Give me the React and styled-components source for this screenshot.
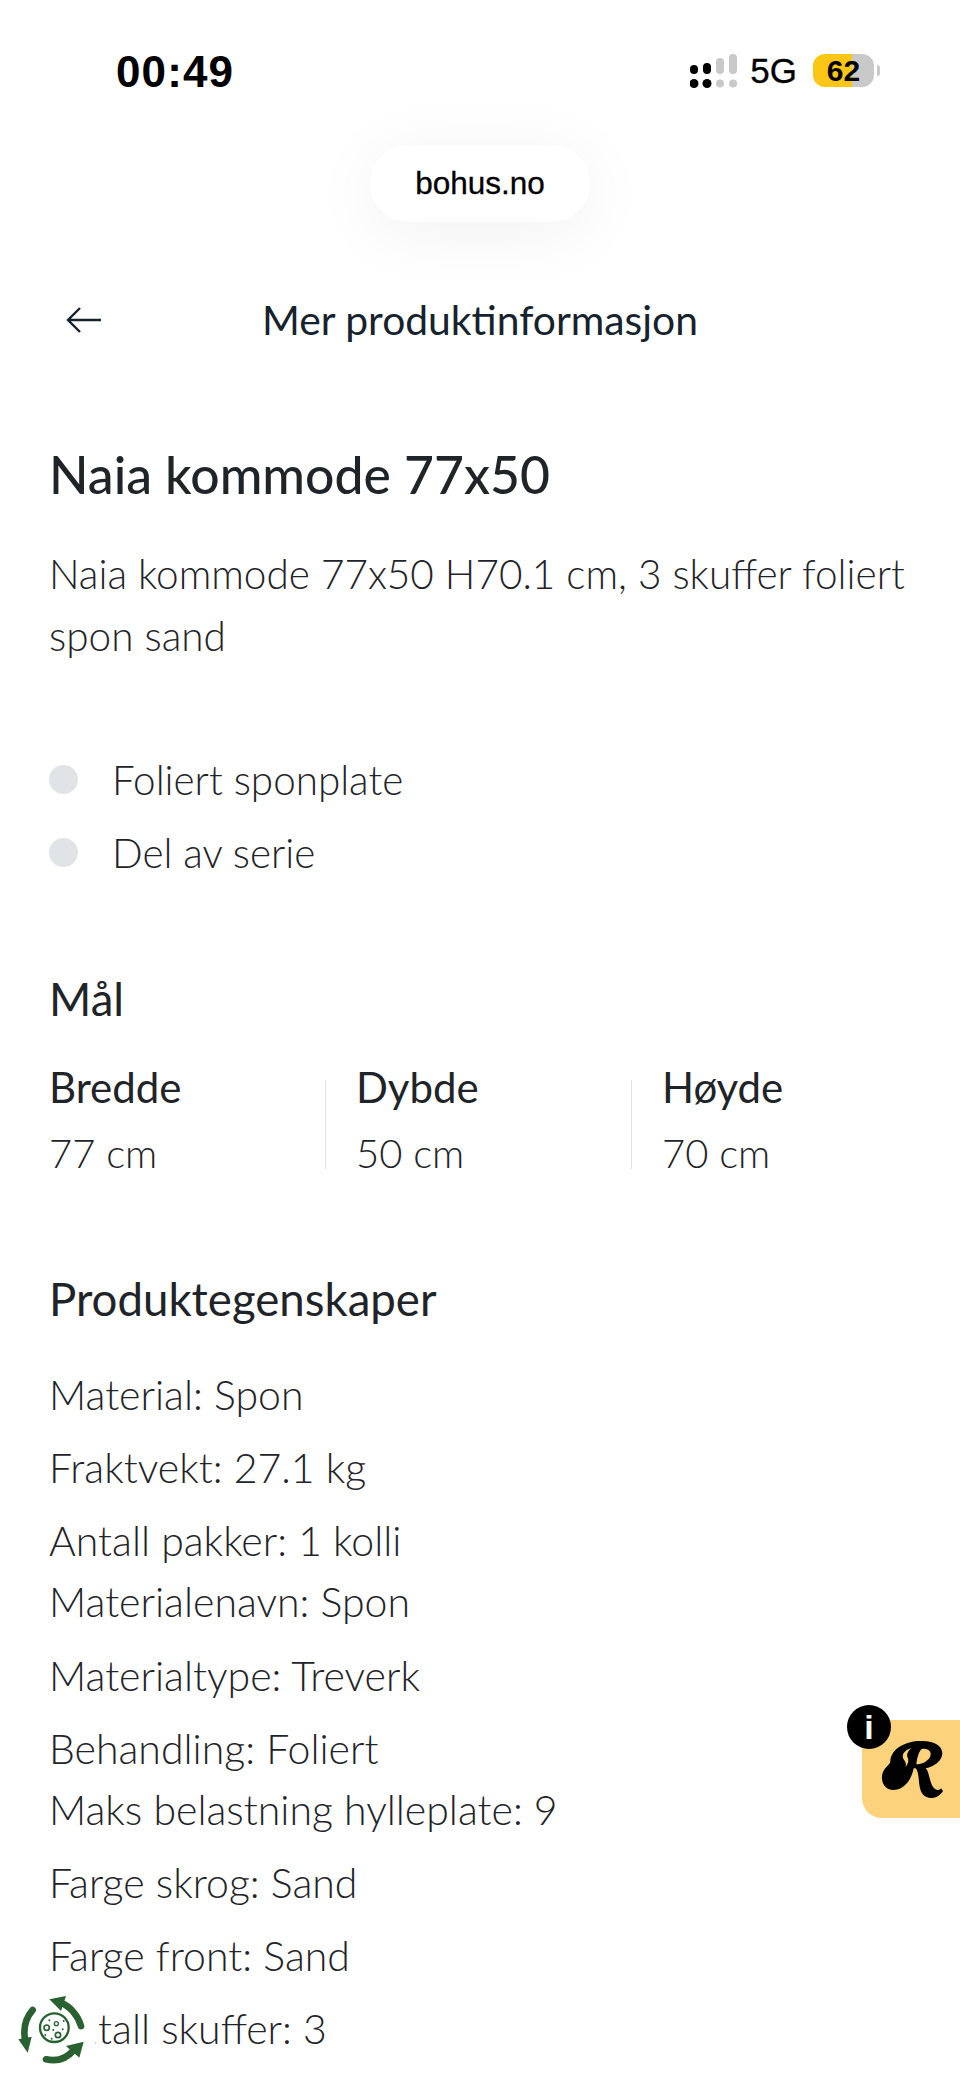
import React from "react";
import styled, { createGlobalStyle } from "styled-components";

const Global = createGlobalStyle`
  html, body { margin: 0; padding: 0; background: #fff; }
  body { font-family: "Lato", "Liberation Sans", sans-serif; color: #1f2428; }
  p, h1, h2, ul { margin: 0; padding: 0; }
`;

const Page = styled.div`
  position: relative;
  width: 960px;
  height: 2081px;
  overflow: hidden;
  background: #fff;
`;

const StatusBar = styled.div`
  display: flex;
  justify-content: space-between;
  align-items: center;
  height: 72px;
  padding: 36px 80px 0 116px;
  font-family: "Liberation Sans", Arial, sans-serif;
  color: #000;
`;

const Clock = styled.div`
  font-size: 44px;
  font-weight: 700;
  letter-spacing: 1.1px;
`;

const StatusIcons = styled.div`
  display: flex;
  align-items: center;
  margin-top: -3px;
`;

const Network = styled.span`
  font-size: 35px;
  margin: 0 16px 0 13px;
  -webkit-text-stroke: 0.3px #000;
`;

const Battery = styled.div`
  position: relative;
  width: 61px;
  height: 33px;
  border-radius: 12px;
  background: linear-gradient(90deg, #fcc714 0 39px, #c9c9c9 39px);
  font-size: 30px;
  font-weight: 700;
  line-height: 33px;
  text-align: center;
  margin-right: 6px;

  &::after {
    content: "";
    position: absolute;
    right: -6px;
    top: 11px;
    width: 3px;
    height: 11px;
    border-radius: 0 4px 4px 0;
    background: #c9c9c9;
  }
`;

const PillRow = styled.div`
  display: flex;
  justify-content: center;
  margin-top: 37px;
`;

const Pill = styled.div`
  width: 220px;
  height: 77px;
  border-radius: 38px;
  background: #fff;
  box-shadow: 0 10px 70px rgba(0, 0, 0, 0.06);
  font-family: "Liberation Sans", Arial, sans-serif;
  font-size: 31.5px;
  line-height: 77px;
  text-align: center;
  color: #000;
  -webkit-text-stroke: 0.3px #000;
`;

const Header = styled.div`
  display: grid;
  grid-template-columns: 1fr auto 1fr;
  align-items: center;
  height: 60px;
  margin-top: 68px;
`;

const BackIcon = styled.svg`
  display: block;
  margin-left: 66px;
`;

const Title = styled.h2`
  font-size: 40.8px;
  font-weight: 400;
  color: #16222c;
  line-height: 60px;
`;

const Main = styled.main`
  padding: 0 49px;
`;

const Heading = styled.h1`
  margin-top: 94px;
  font-size: 51.7px;
  font-weight: 500;
  line-height: 60px;
`;

const Description = styled.p`
  margin-top: 39px;
  font-size: 40.5px;
  font-weight: 300;
  line-height: 61.5px;
`;

const Bullets = styled.ul`
  list-style: none;
  margin-top: 77px;
`;

const Bullet = styled.li`
  display: flex;
  align-items: center;
  gap: 34px;
  height: 73px;
  font-size: 40.4px;
  font-weight: 300;

  &::before {
    content: "";
    width: 29px;
    height: 29px;
    border-radius: 50%;
    background: #e1e4e7;
  }
`;

const SectionTitle = styled.h2`
  margin-top: ${(p) => p.$top}px;
  font-size: 45.6px;
  font-weight: 400;
  line-height: 50px;
`;

const Dimensions = styled.div`
  display: flex;
  margin-top: 38px;
`;

const Dimension = styled.div`
  flex: none;
  width: ${(p) => (p.$first ? 276 : 275)}px;
  display: flex;
  flex-direction: column;
  gap: 16px;
`;

const DimLabel = styled.div`
  font-size: 42px;
  font-weight: 400;
  line-height: 50px;
`;

const DimValue = styled.div`
  font-size: 40px;
  font-weight: 300;
  line-height: 50px;
`;

const Divider = styled.div`
  flex: none;
  align-self: center;
  width: 1px;
  height: 89px;
  margin: 8px 30px 0 0;
  background: #dfe1e3;
`;

const Specs = styled.div`
  margin-top: 40px;
`;

const Spec = styled.p`
  margin-bottom: 12.2px;
  font-size: 41px;
  font-weight: 300;
  line-height: 61px;
`;

const ReviewBadge = styled.div`
  position: absolute;
  right: 0;
  top: 1720px;
  width: 98px;
  height: 98px;
  border-radius: 0 0 0 20px;
  background: #fdd27c;
  display: flex;
  align-items: center;
  justify-content: center;
`;

const InfoDot = styled.div`
  position: absolute;
  left: -15px;
  top: -15px;
  width: 44px;
  height: 44px;
  border-radius: 50%;
  background: #000;
  color: #fff;
  font-family: "Liberation Sans", Arial, sans-serif;
  font-size: 34px;
  font-weight: 700;
  line-height: 44px;
  text-align: center;
`;

const RMark = styled.svg`
  margin-left: 3px;
`;

const EcoBadge = styled.div`
  position: absolute;
  left: 3px;
  top: 1982px;
  width: 95px;
  height: 92px;
  border-radius: 46px;
  background: #fff;
  display: flex;
  align-items: center;
  justify-content: center;
`;

const SignalIcon = () => (
  <svg width="47" height="34" viewBox="0 0 47 34">
    <circle cx="4" cy="29.5" r="4.5" fill="#000" />
    <circle cx="17" cy="29.5" r="4.5" fill="#000" />
    <circle cx="30" cy="29.5" r="4" fill="#c9c9c9" />
    <circle cx="43" cy="29.5" r="4" fill="#c9c9c9" />
    <rect x="0" y="11" width="8" height="9" rx="4" fill="#000" />
    <rect x="13" y="9" width="8" height="11" rx="4" fill="#000" />
    <rect x="26" y="4" width="8" height="16" rx="4" fill="#c9c9c9" />
    <rect x="39" y="0" width="8" height="20" rx="4" fill="#c9c9c9" />
  </svg>
);

const RLogo = () => (
  <RMark width="75" height="68" viewBox="0 0 225 204">
    <path
      fill="#000"
      d="M46 78C48 40 95 16 142 18C188 18 212 42 198 70C190 86 170 96 152 100C166 112 162 160 188 165C193 165 196 163 198 160L204 168C194 186 170 196 150 184C124 166 138 118 122 100L116 100C108 140 84 166 52 165C20 162 10 120 34 96C42 88 46 84 46 78Z"
    />
    <path fill="#fdd27c" d="M140 42C160 38 172 50 165 66C158 80 140 88 124 88C126 70 130 52 140 42Z" />
    <path fill="#fdd27c" d="M110 40C88 44 76 62 88 76C92 82 94 88 92 96C100 84 102 76 98 68C94 58 98 48 110 40Z" />
  </RMark>
);

const EcoIcon = () => (
  <svg width="80" height="85" viewBox="0 0 240 255">
    <g fill="none" stroke="#2a6130" strokeLinecap="round">
      <path d="M150 50C178 62 202 90 210 120" strokeWidth="20" />
      <path d="M105 220C140 228 170 215 190 190" strokeWidth="20" />
      <path d="M65 72C45 95 36 125 42 160" strokeWidth="20" />
      <circle cx="130" cy="125" r="43" strokeWidth="7" />
      <circle cx="107" cy="125" r="8" strokeWidth="5" />
      <circle cx="136" cy="113" r="6" strokeWidth="4" />
      <circle cx="141" cy="147" r="8" strokeWidth="5" />
    </g>
    <g fill="#2a6130">
      <polygon points="115,40 165,30 150,75" />
      <polygon points="218,167 165,180 205,215" />
      <polygon points="22,160 62,152 50,200" />
      <circle cx="115" cy="103" r="3" />
      <circle cx="158" cy="105" r="3" />
      <circle cx="155" cy="130" r="3" />
      <circle cx="122" cy="158" r="3" />
      <circle cx="103" cy="147" r="3" />
      <circle cx="127" cy="132" r="3" />
    </g>
  </svg>
);

const dimensions = [
  ["Bredde", "77 cm"],
  ["Dybde", "50 cm"],
  ["Høyde", "70 cm"],
];

const specs = [
  ["Material: Spon"],
  ["Fraktvekt: 27.1 kg"],
  ["Antall pakker: 1 kolli", "Materialenavn: Spon"],
  ["Materialtype: Treverk"],
  ["Behandling: Foliert", "Maks belastning hylleplate: 9"],
  ["Farge skrog: Sand"],
  ["Farge front: Sand"],
  ["Antall skuffer: 3"],
];

export default function App() {
  return (
    <Page>
      <Global />
      <StatusBar>
        <Clock>00:49</Clock>
        <StatusIcons>
          <SignalIcon />
          <Network>5G</Network>
          <Battery>62</Battery>
        </StatusIcons>
      </StatusBar>
      <PillRow>
        <Pill>bohus.no</Pill>
      </PillRow>
      <Header>
        <BackIcon width="36" height="26" viewBox="0 0 36 26" fill="none" stroke="#16222c" strokeWidth="2.4">
          <path d="M35 13H2M14 1L2 13l12 12" />
        </BackIcon>
        <Title>Mer produktinformasjon</Title>
      </Header>
      <Main>
        <Heading>Naia kommode 77x50</Heading>
        <Description>
          Naia kommode 77x50 H70.1 cm, 3 skuffer foliert
          <br />
          spon sand
        </Description>
        <Bullets>
          <Bullet>Foliert sponplate</Bullet>
          <Bullet>Del av serie</Bullet>
        </Bullets>
        <SectionTitle $top={85}>Mål</SectionTitle>
        <Dimensions>
          {dimensions.map(([label, value], i) => (
            <React.Fragment key={label}>
              {i > 0 && <Divider />}
              <Dimension $first={i === 0}>
                <DimLabel>{label}</DimLabel>
                <DimValue>{value}</DimValue>
              </Dimension>
            </React.Fragment>
          ))}
        </Dimensions>
        <SectionTitle $top={96}>Produktegenskaper</SectionTitle>
        <Specs>
          {specs.map((lines) => (
            <Spec key={lines[0]}>
              {lines.map((line, i) => (
                <React.Fragment key={line}>
                  {i > 0 && <br />}
                  {line}
                </React.Fragment>
              ))}
            </Spec>
          ))}
        </Specs>
      </Main>
      <ReviewBadge>
        <InfoDot>i</InfoDot>
        <RLogo />
      </ReviewBadge>
      <EcoBadge>
        <EcoIcon />
      </EcoBadge>
    </Page>
  );
}
